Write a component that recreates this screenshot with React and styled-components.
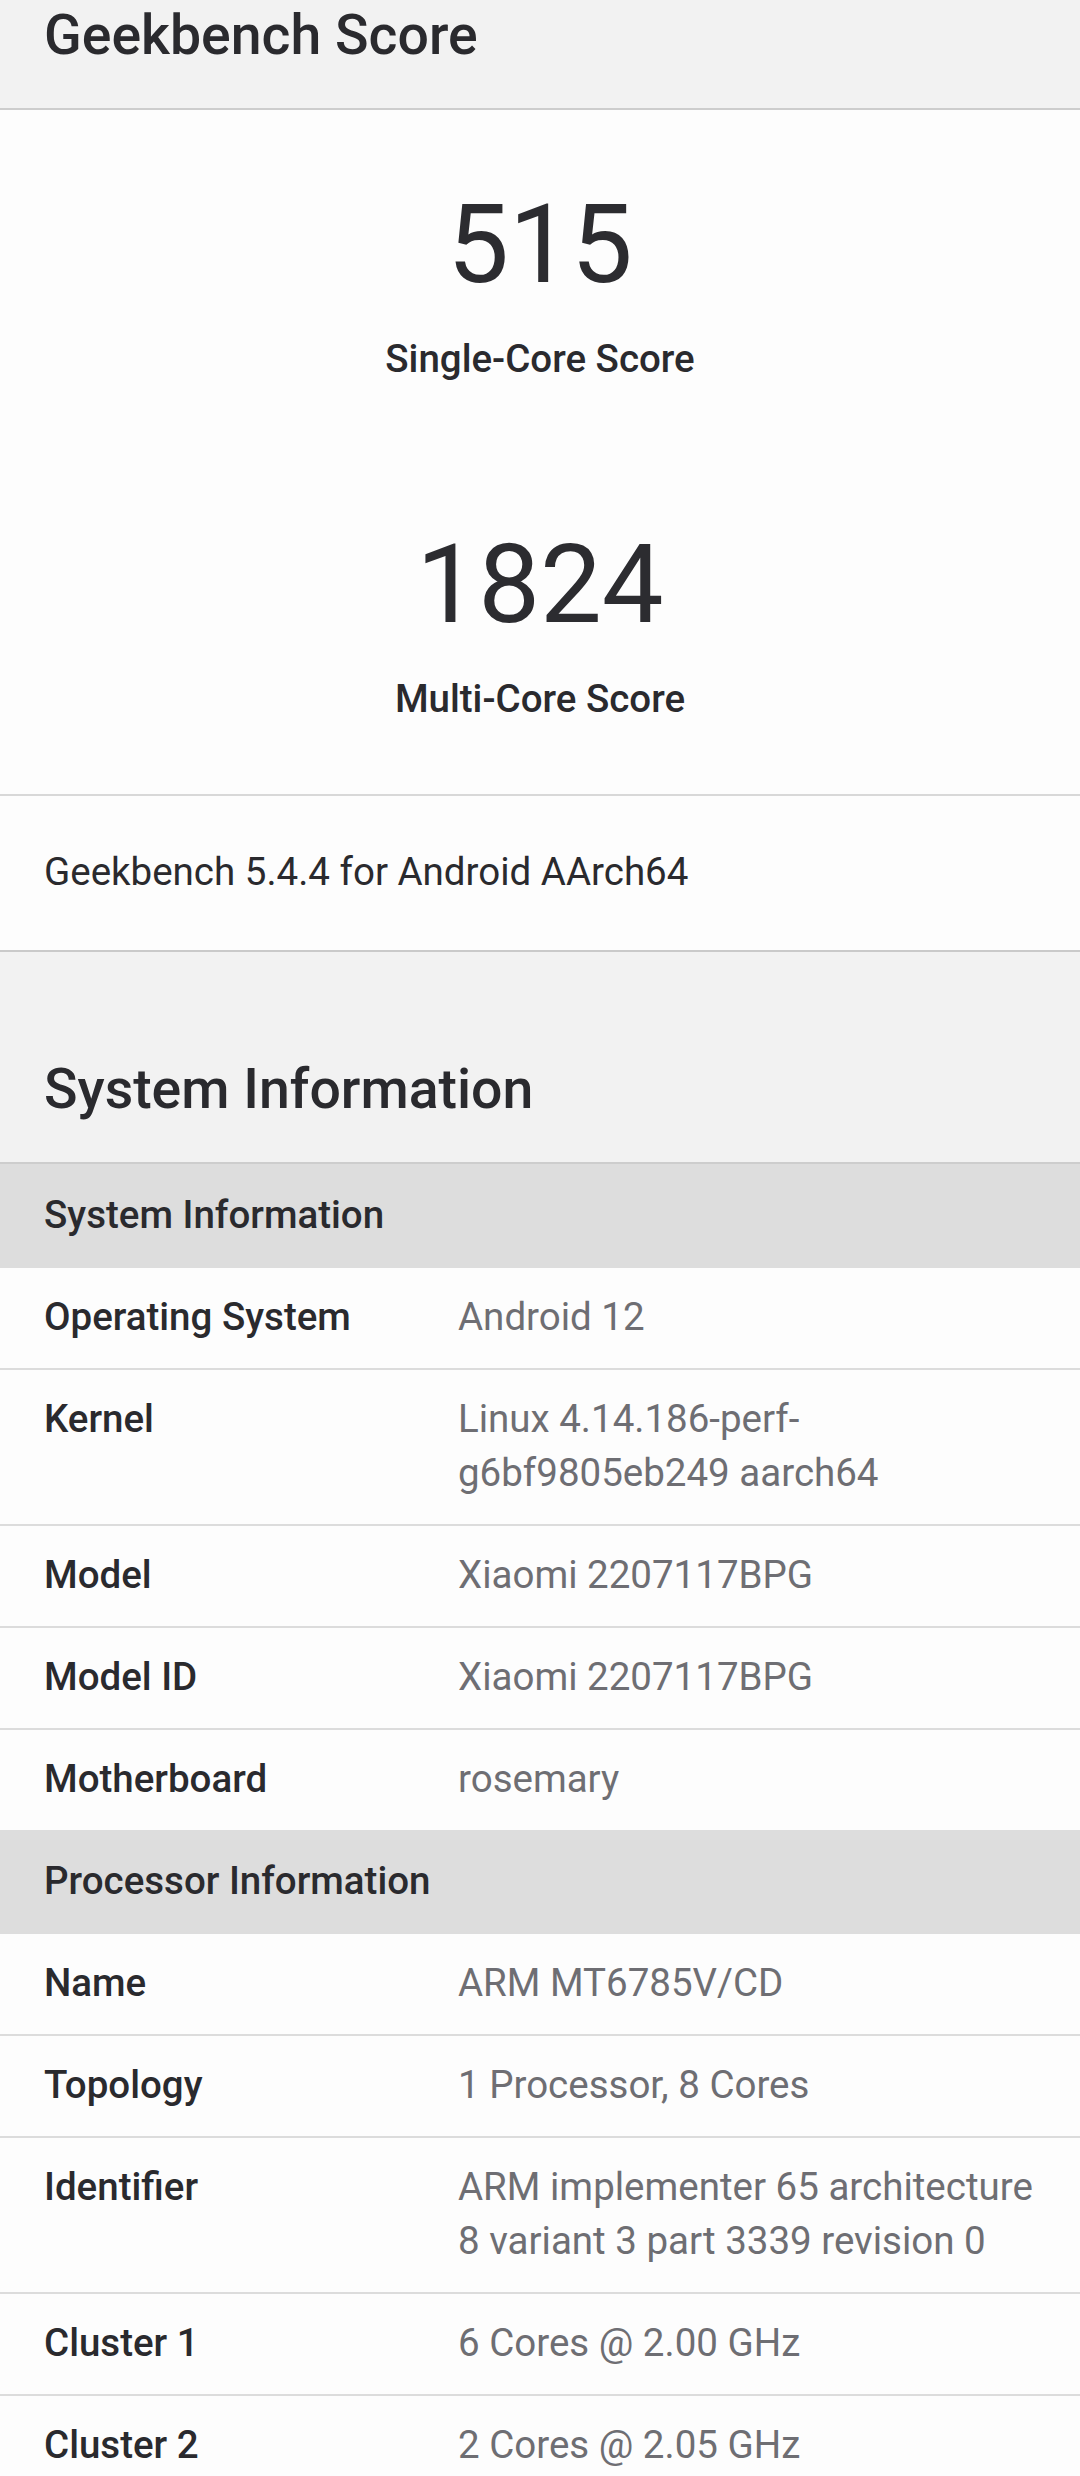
import React from "react";
import styled, { createGlobalStyle } from "styled-components";

const GlobalStyle = createGlobalStyle`
  html, body {
    margin: 0;
    padding: 0;
    background: #fdfdfd;
  }
  body {
    font-family: Roboto, "Noto Sans", "Liberation Sans", sans-serif;
    color: #2a2a2e;
    -webkit-font-smoothing: antialiased;
  }
  * {
    box-sizing: border-box;
  }
`;

const Page = styled.div`
  width: 1080px;
  background: #fdfdfd;
`;

const SectionHeader = styled.header`
  background: #f2f2f2;
  padding: ${(p) => (p.$top ? "2px" : "104px")} 44px 39px;
  border-bottom: 2px solid #cdcdcd;
`;

const SectionTitle = styled.h1`
  margin: 0;
  font-size: 55.4px;
  line-height: 67px;
  font-weight: 500;
  color: #2a2a2e;
`;

const ScoreSection = styled.section`
  display: flex;
  flex-direction: column;
  align-items: center;
  padding: 70px 0 68px;
  gap: 134px;
  border-bottom: 2px solid #d8d8d8;
`;

const ScoreBlock = styled.div`
  display: flex;
  flex-direction: column;
  align-items: center;
  gap: 22px;
`;

const ScoreValue = styled.div`
  font-size: 110px;
  line-height: 130px;
  font-weight: 400;
  color: #2c2c30;
`;

const ScoreLabel = styled.div`
  font-size: 38.5px;
  line-height: 54px;
  font-weight: 500;
  color: #2a2a2e;
`;

const VersionRow = styled.div`
  padding: 49px 44px 51px;
  font-size: 38.5px;
  line-height: 54px;
  color: #2a2a2e;
  border-bottom: 2px solid #cacaca;
`;

const Table = styled.div`
  display: flex;
  flex-direction: column;
`;

const GroupHeader = styled.div`
  background: #dddddd;
  padding: 24px 44px 26px;
  font-size: 38.5px;
  line-height: 54px;
  font-weight: 500;
  color: #2a2a2e;
`;

const Row = styled.div`
  display: grid;
  grid-template-columns: 414px 1fr;
  padding: 22px 44px 24px;
  font-size: 38.5px;
  line-height: 54px;
  border-bottom: 2px solid #dcdcdc;

  &:last-child {
    border-bottom: none;
  }
`;

const Label = styled.div`
  font-weight: 500;
  color: #2a2a2e;
`;

const Value = styled.div`
  font-weight: 400;
  color: #6e6e73;
`;

const groups = [
  {
    title: "System Information",
    rows: [
      ["Operating System", "Android 12"],
      ["Kernel", "Linux 4.14.186-perf-g6bf9805eb249 aarch64"],
      ["Model", "Xiaomi 2207117BPG"],
      ["Model ID", "Xiaomi 2207117BPG"],
      ["Motherboard", "rosemary"],
    ],
  },
  {
    title: "Processor Information",
    rows: [
      ["Name", "ARM MT6785V/CD"],
      ["Topology", "1 Processor, 8 Cores"],
      ["Identifier", "ARM implementer 65 architecture 8 variant 3 part 3339 revision 0"],
      ["Cluster 1", "6 Cores @ 2.00 GHz"],
      ["Cluster 2", "2 Cores @ 2.05 GHz"],
    ],
  },
];

export default function App() {
  return (
    <Page>
      <GlobalStyle />
      <SectionHeader $top>
        <SectionTitle>Geekbench Score</SectionTitle>
      </SectionHeader>
      <ScoreSection>
        <ScoreBlock>
          <ScoreValue>515</ScoreValue>
          <ScoreLabel>Single-Core Score</ScoreLabel>
        </ScoreBlock>
        <ScoreBlock>
          <ScoreValue>1824</ScoreValue>
          <ScoreLabel>Multi-Core Score</ScoreLabel>
        </ScoreBlock>
      </ScoreSection>
      <VersionRow>Geekbench 5.4.4 for Android AArch64</VersionRow>
      <SectionHeader>
        <SectionTitle>System Information</SectionTitle>
      </SectionHeader>
      {groups.map((group) => (
        <Table key={group.title}>
          <GroupHeader>{group.title}</GroupHeader>
          {group.rows.map(([label, value]) => (
            <Row key={label}>
              <Label>{label}</Label>
              <Value>{value}</Value>
            </Row>
          ))}
        </Table>
      ))}
    </Page>
  );
}
